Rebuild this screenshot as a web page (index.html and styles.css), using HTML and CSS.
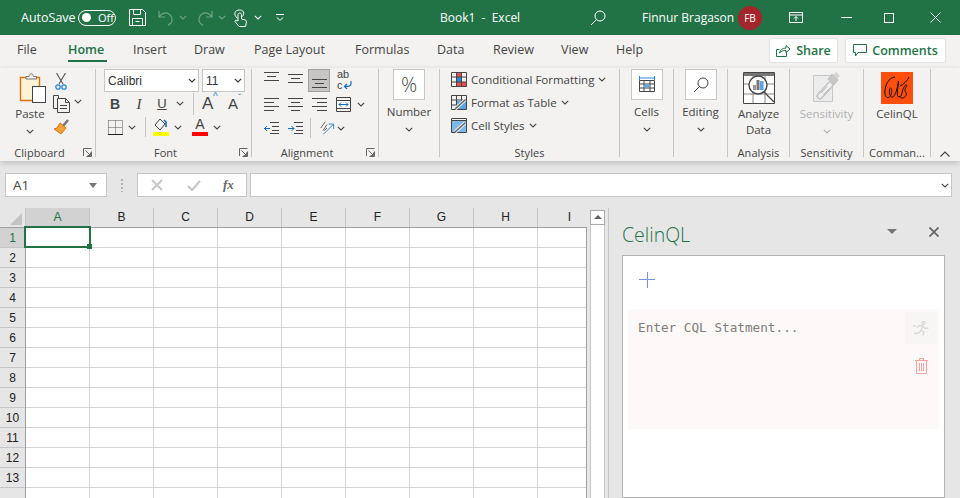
FILE: index.html
```html
<!DOCTYPE html>
<html lang="en">
<head>
    <meta charset="UTF-8">
    <title>Book1 - Excel</title>
    <link rel="stylesheet" href="styles.css">
</head>
<body>
    <svg class="defs" width="0" height="0">
        <symbol id="chev" viewBox="0 0 8 5"><path d="M.8.8 4 4l3.2-3.2" fill="none" stroke="currentColor" stroke-width="1.1"/></symbol>
        <symbol id="launch" viewBox="0 0 9 9"><path d="M.5 8V.5h8M8.500 3.500v5h-5M2.500 2.500l5 5M7.500 4.500v3h-3" fill="none" stroke="#666"/></symbol>
    </svg>

    <!-- title bar -->
    <header class="titlebar">
        <span class="autosave">AutoSave</span>
        <span class="toggle"><i></i>Off</span>
        <svg class="tb-save" width="17" height="17" viewBox="0 0 17 17" fill="none" stroke="#fff"><path d="M.5.500h13l3 3v13H.5zM4.500.500v5h7v-5M3.500 16.500v-7h10v7M6.500 12.500h4"/></svg>
        <svg class="tb-undo" width="16" height="16" viewBox="0 0 16 16" fill="none" stroke="#6fa287" stroke-width="1.2"><path d="M1 1v6h6M1.500 6.500C4 3 8 2 11 4s4 6 2 9l-3 2.500"/></svg>
        <svg class="tb-chev" width="8" height="5"><use href="#chev"/></svg>
        <svg class="tb-redo" width="16" height="16" viewBox="0 0 16 16" fill="none" stroke="#6fa287" stroke-width="1.2"><path d="M15 1v6H9M14.500 6.500C12 3 8 2 5 4s-4 6-2 9l3 2.500"/></svg>
        <svg class="tb-chev" width="8" height="5"><use href="#chev"/></svg>
        <svg class="tb-touch" width="13" height="18" viewBox="0 0 13 18" fill="none" stroke="#fff"><path d="M3.500 9.500C1 7 .5 5.500 1 3.500 2 .5 8 0 9.500 3c.5 1.500 0 3-1 4.500M4 5.500c0-2 3.500-2 3.500 0v4.500l4 1c1 .5 1 1.500.8 3l-.8 3.500H5l-4-5c0-1.500 1.500-1.500 3-.5z"/></svg>
        <svg class="tb-chev white" width="8" height="5"><use href="#chev"/></svg>
        <svg class="tb-custom" width="8" height="7" viewBox="0 0 8 7" fill="none" stroke="#fff"><path d="M0 .5h8M.8 3.500 4 6.300l3.200-2.800"/></svg>
        <span class="doc-title">Book1&nbsp; -&nbsp; Excel</span>
        <svg class="tb-search" width="16" height="16" viewBox="0 0 16 16" fill="none" stroke="#fff"><circle cx="10" cy="6" r="5"/><path d="M6.500 9.500 1 15"/></svg>
        <span class="user">Finnur Bragason</span>
        <span class="avatar">FB</span>
        <svg class="tb-display" width="14" height="11" viewBox="0 0 14 11" fill="none" stroke="#fff"><path d="M.5.500h13v10H.5zM.5 3h13M7 9V4.500M5 6.500l2-2 2 2"/></svg>
        <svg class="tb-min" width="11" height="1"><path d="M0 .5h11" stroke="#fff"/></svg>
        <svg class="tb-max" width="10" height="10"><rect x=".5" y=".5" width="9" height="9" fill="none" stroke="#fff"/></svg>
        <svg class="tb-close" width="11" height="11" viewBox="0 0 11 11"><path d="M.5.500l10 10M10.500.500l-10 10" stroke="#fff"/></svg>
    </header>

    <!-- tabs -->
    <nav class="tabs">
        <span class="tab t-file">File</span>
        <span class="tab t-home active">Home</span>
        <span class="tab t-insert">Insert</span>
        <span class="tab t-draw">Draw</span>
        <span class="tab t-layout">Page Layout</span>
        <span class="tab t-formulas">Formulas</span>
        <span class="tab t-data">Data</span>
        <span class="tab t-review">Review</span>
        <span class="tab t-view">View</span>
        <span class="tab t-help">Help</span>
        <span class="pill share">
            <svg width="15" height="13" viewBox="0 0 15 13" fill="none" stroke="#217346"><path d="M10.500 7.500v5H.5V5.500h3M3.500 9c.5-3 3-5 6.500-5V1.500L14 5l-4 3.500V6.500C7.500 6.500 5 7 3.500 9z"/></svg>
            Share
        </span>
        <span class="pill comments">
            <svg width="14" height="13" viewBox="0 0 14 13" fill="none" stroke="#217346"><path d="M.5.500h13v8H5L2.500 12V8.500H.5z"/></svg>
            Comments
        </span>
    </nav>

    <!-- ribbon -->
    <section class="ribbon">
        <div class="group g-clipboard">
            <div class="group-body">
                <div class="big paste-col">
                    <svg width="28" height="30" viewBox="0 0 28 30" fill="none"><path d="M1.500 4.500h19v23h-19z" fill="#fff3d6" stroke="#d9730d" stroke-width="1.4"/><path d="M7 6V3.500h3c.5-3.500 4-3.500 4.500 0h3V6z" fill="#f3f2f1" stroke="#777"/><rect x="13.500" y="13.500" width="13" height="16" fill="#fff" stroke="#444"/></svg>
                    <span class="big-label">Paste</span>
                    <svg class="chev" width="8" height="5"><use href="#chev"/></svg>
                </div>
                <div class="clip-tools">
                    <svg width="12" height="17" viewBox="0 0 12 17" fill="none"><path d="M1.500 0 8 11M10.500 0 4 11" stroke="#555" stroke-width="1.1"/><circle cx="3" cy="14" r="2.200" stroke="#2b88d8" stroke-width="1.300"/><circle cx="9" cy="14" r="2.200" stroke="#2b88d8" stroke-width="1.300"/></svg>
                    <span class="copy-row">
                        <svg width="17" height="18" viewBox="0 0 17 18" fill="none" stroke="#444"><path d="M5.500 3.500v-3H.5v13h4"/><path d="M4.500 3.500h8l4 4v10h-12zM12.500 3.500v4h4M7 10.500h7M7 13.500h7"/></svg>
                        <svg class="chev" width="8" height="5"><use href="#chev"/></svg>
                    </span>
                    <svg class="brush" width="17" height="16" viewBox="0 0 17 16" fill="none"><path d="M10 7l5-6" stroke="#777" stroke-width="2.500"/><path d="M7 4l6 5-5 6-7-5 3-1z" fill="#f2a33a" stroke="#d9730d"/></svg>
                </div>
            </div>
            <div class="group-label launched">Clipboard<svg class="launch" width="9" height="9"><use href="#launch"/></svg></div>
        </div>

        <div class="group g-font">
            <div class="group-body col">
                <div class="font-row first">
                    <span class="select font-name">Calibri<svg width="8" height="5"><use href="#chev"/></svg></span>
                    <span class="select font-size">11<svg width="8" height="5"><use href="#chev"/></svg></span>
                </div>
                <div class="font-row second">
                    <span class="btn bold">B</span>
                    <span class="btn italic">I</span>
                    <span class="btn under">U</span>
                    <svg class="chev-s" width="8" height="5"><use href="#chev"/></svg>
                    <span class="vsep"></span>
                    <span class="btn grow">A<sup>^</sup></span>
                    <span class="btn shrink">A<sup>ˇ</sup></span>
                </div>
                <div class="font-row third">
                    <svg class="borders" width="15" height="15" viewBox="0 0 15 15" fill="none"><path d="M.5.500h14M.5.500v13M14.500.500v13M7.500.500v13M.5 7.500h14" stroke="#555" stroke-dasharray="1 1"/><path d="M0 14.500h15" stroke="#222"/></svg>
                    <svg class="chev-s" width="8" height="5"><use href="#chev"/></svg>
                    <span class="vsep short"></span>
                    <span class="swatch-btn">
                        <svg width="15" height="13" viewBox="0 0 15 13" fill="none"><path d="M6 1 1 7l5 5 5-6z" stroke="#444"/><path d="M12 9V4l-2-2" stroke="#106ebe" stroke-width="1.600"/></svg>
                        <i class="swatch yellow"></i>
                    </span>
                    <svg class="chev-s" width="8" height="5"><use href="#chev"/></svg>
                    <span class="swatch-btn colour">
                        <span class="letter-a">A</span>
                        <i class="swatch red"></i>
                    </span>
                    <svg class="chev-s" width="8" height="5"><use href="#chev"/></svg>
                </div>
            </div>
            <div class="group-label launched">Font<svg class="launch" width="9" height="9"><use href="#launch"/></svg></div>
        </div>

        <div class="group g-align">
            <div class="group-body col">
                <div class="align-row first">
                    <span class="abtn top"><svg width="15" height="10" viewBox="0 0 15 10"><path d="M0 .5h15M3 4.500h9M0 8.500h15" stroke="#444"/></svg></span>
                    <span class="abtn middle"><svg width="15" height="10" viewBox="0 0 15 10"><path d="M0 .5h15M3 4.500h9M0 8.500h15" stroke="#444"/></svg></span>
                    <span class="abtn on"><svg width="15" height="10" viewBox="0 0 15 10"><path d="M0 .5h15M3 4.500h9M0 8.500h15" stroke="#444"/></svg></span>
                    <span class="abtn wrap">ab<br>c<svg width="9" height="8" viewBox="0 0 9 8" fill="none"><path d="M8 0v3c0 2-2 2.500-6 2.500M4 3 1.500 5.500 4 8" stroke="#106ebe" stroke-width="1.200"/></svg></span>
                </div>
                <div class="align-row">
                    <span class="abtn"><svg width="15" height="13" viewBox="0 0 15 13"><path d="M0 .5h15M0 4.500h10M0 8.500h15M0 12.500h10" stroke="#444"/></svg></span>
                    <span class="abtn"><svg width="15" height="13" viewBox="0 0 15 13"><path d="M0 .5h15M3 4.500h9M0 8.500h15M3 12.500h9" stroke="#444"/></svg></span>
                    <span class="abtn"><svg width="15" height="13" viewBox="0 0 15 13"><path d="M0 .5h15M5 4.500h10M0 8.500h15M5 12.500h10" stroke="#444"/></svg></span>
                    <span class="abtn"><svg width="15" height="15" viewBox="0 0 15 15" fill="none"><path d="M.5.500h14v14H.5z" stroke="#444"/><path d="M.5 3.500h14M.5 11.500h14" stroke="#444"/><rect x="1" y="4" width="13" height="7" fill="#fff"/><path d="M3 7.500h9M5 5.500l-2 2 2 2M10 5.500l2 2-2 2" stroke="#106ebe"/></svg></span>
                    <svg class="chev-s" width="8" height="5"><use href="#chev"/></svg>
                </div>
                <div class="align-row">
                    <span class="abtn"><svg width="15" height="12" viewBox="0 0 15 12" fill="none"><path d="M6 .5h9M8 4.500h7M8 8.500h7M6 11.500h9" stroke="#444"/><path d="M0 6.500h6M3 4 .5 6.500 3 9" stroke="#106ebe"/></svg></span>
                    <span class="abtn"><svg width="15" height="12" viewBox="0 0 15 12" fill="none"><path d="M6 .5h9M8 4.500h7M8 8.500h7M6 11.500h9" stroke="#444"/><path d="M0 6.500h6M3.500 4 6 6.500 3.500 9" stroke="#106ebe"/></svg></span>
                    <span class="vsep short tight"></span>
                    <svg class="orient" width="16" height="16" viewBox="0 0 18 16" fill="none"><path d="M2 8 7 1M4.500 11 9 4M9 8l-3 3" stroke="#555"/><path d="M5 15 16 4M11 3.500h5.500V9" stroke="#2b88d8" stroke-width="1.100"/></svg>
                    <svg class="chev-s" width="8" height="5"><use href="#chev"/></svg>
                </div>
            </div>
            <div class="group-label launched">Alignment<svg class="launch" width="9" height="9"><use href="#launch"/></svg></div>
        </div>

        <div class="group g-number">
            <div class="group-body">
                <div class="big">
                    <span class="box"><span class="percent">%</span></span>
                    <span class="big-label">Number</span>
                    <svg class="chev" width="8" height="5"><use href="#chev"/></svg>
                </div>
            </div>
            <div class="group-label"></div>
        </div>

        <div class="group g-styles">
            <div class="group-body col styles-col">
                <span class="style-row">
                    <svg width="16" height="15" viewBox="0 0 16 15" fill="none"><rect x="5" y="1" width="6" height="4" fill="#e8504f"/><rect x="5" y="10" width="10" height="4" fill="#e8504f"/><rect x="5" y="5" width="6" height="5" fill="#2b88d8"/><path d="M.5.500h15v14H.5zM.5 5h15M.5 10h15M5.500.500v14M10.500.500v14" stroke="#444"/></svg>
                    <span>Conditional Formatting</span>
                    <svg width="8" height="5"><use href="#chev"/></svg>
                </span>
                <span class="style-row">
                    <svg width="16" height="15" viewBox="0 0 16 15" fill="none"><path d="M.5.500h15v14H.5zM.5 5h15M.5 10h15M5.500.500v14M10.500.500v14" stroke="#444"/><rect x="6" y="6" width="9" height="8" fill="#5ba5e4"/><path d="M4 14l10-9" stroke="#f3f2f1" stroke-width="3.500"/><path d="M4 14l10-9" stroke="#666" stroke-width="1.600"/></svg>
                    <span>Format as Table</span>
                    <svg width="8" height="5"><use href="#chev"/></svg>
                </span>
                <span class="style-row">
                    <svg width="16" height="15" viewBox="0 0 16 15" fill="none"><path d="M.5.500h15v14H.5z" stroke="#444"/><rect x="1" y="3" width="14" height="11" fill="#7db8ea"/><path d="M.5 2.500h15" stroke="#444"/><path d="M4 14l10-9" stroke="#f3f2f1" stroke-width="3.500"/><path d="M4 14l10-9" stroke="#666" stroke-width="1.600"/></svg>
                    <span>Cell Styles</span>
                    <svg width="8" height="5"><use href="#chev"/></svg>
                </span>
            </div>
            <div class="group-label">Styles</div>
        </div>

        <div class="group g-cells">
            <div class="group-body">
                <div class="big">
                    <span class="box">
                        <svg width="18" height="17" viewBox="0 0 18 17" fill="none"><path d="M1.500 2h15M1.500 0v4M16.500 0v4" stroke="#2b88d8"/><path d="M1.500 4.500h15v11h-15zM1.500 8h15M1.500 12h15M6 4.500v11M12 4.500v11" stroke="#444"/><rect x="6.500" y="8.500" width="5" height="3" fill="#5ba5e4"/></svg>
                    </span>
                    <span class="big-label">Cells</span>
                    <svg class="chev" width="8" height="5"><use href="#chev"/></svg>
                </div>
            </div>
            <div class="group-label"></div>
        </div>

        <div class="group g-editing">
            <div class="group-body">
                <div class="big">
                    <span class="box">
                        <svg width="16" height="16" viewBox="0 0 16 16" fill="none" stroke="#444"><circle cx="10" cy="6" r="5"/><path d="M6.500 9.500 1 15"/></svg>
                    </span>
                    <span class="big-label">Editing</span>
                    <svg class="chev" width="8" height="5"><use href="#chev"/></svg>
                </div>
            </div>
            <div class="group-label"></div>
        </div>

        <div class="group g-analysis">
            <div class="group-body">
                <div class="big">
                    <svg class="top-icon" width="32" height="32" viewBox="0 0 32 32" fill="none">
                        <path d="M.5.500h31v31H.5z" fill="#fff" stroke="#444"/>
                        <rect x="1" y="1" width="30" height="3" fill="#777"/>
                        <path d="M1 12h30M1 22h30M10 4v27M22 4v27" stroke="#888"/>
                        <circle cx="15" cy="13" r="9" fill="#fff" stroke="#444" stroke-width="1.400"/>
                        <rect x="10" y="13" width="3" height="5" fill="#999"/>
                        <rect x="13.500" y="8" width="3" height="10" fill="#777"/>
                        <rect x="17" y="9" width="3.500" height="9" fill="#5ba5e4"/>
                        <path d="M21 20l10 10" stroke="#444" stroke-width="1.300"/>
                    </svg>
                    <span class="big-label">Analyze<br>Data</span>
                </div>
            </div>
            <div class="group-label">Analysis</div>
        </div>

        <div class="group g-sens">
            <div class="group-body">
                <div class="big muted">
                    <svg class="top-icon" width="27" height="30" viewBox="0 0 27 30" fill="none">
                        <path d="M.5 3.500h19v26H.5z" fill="#ececec" stroke="#c6c6c6"/>
                        <path d="M7 24 17 13" stroke="#c4c4c4" stroke-width="7" stroke-linecap="round"/>
                        <path d="M7 24 17 13" stroke="#efefef" stroke-width="4" stroke-linecap="round"/>
                        <path d="M8 21l6-6.500M10.500 23l6-6.500" stroke="#b8b8b8"/>
                        <path d="M15 7l6 6 4-5-6-6z" fill="#c8c8c8" stroke="#c0c0c0"/>
                        <path d="M20 3l3-3 4 4-3 3z" fill="#d4d4d4"/>
                    </svg>
                    <span class="big-label">Sensitivity</span>
                    <svg class="chev" width="8" height="5"><use href="#chev"/></svg>
                </div>
            </div>
            <div class="group-label">Sensitivity</div>
        </div>

        <div class="group g-command">
            <div class="group-body">
                <div class="big">
                    <svg class="top-icon" width="32" height="32" viewBox="0 0 32 32" fill="none">
                        <rect width="32" height="32" fill="#ff4e0d"/>
                        <path d="M14 5C8 5 3 14 4 22c.5 4 4 5 6 1 1-3 1-7-.5-7-2 0-1.500 10 2 9 3-1 5-9 6-16 0 5-3 16 .5 16 2 0 3-3 3.500-6 .5-2 2-6 4-6 1.500 0-3 4-1 7 2 2 0 6-3 6-2 0-3-2-3-2M19 14c3-1 8-6 9-9" stroke="#111" stroke-width="1"/>
                    </svg>
                    <span class="big-label">CelinQL</span>
                </div>
            </div>
            <div class="group-label">Comman...</div>
        </div>
        <svg class="collapse" width="10" height="6" viewBox="0 0 10 6"><path d="M.5 5.500 5 1l4.500 4.500" fill="none" stroke="#444" stroke-width="1.100"/></svg>
    </section>

    <!-- formula bar -->
    <div class="formula">
        <span class="namebox">A1<i class="tri"></i></span>
        <span class="grip"></span>
        <span class="fx-box">
            <svg width="12" height="12" viewBox="0 0 12 12"><path d="M1 1l10 10M11 1 1 11" stroke="#c6c6c6" stroke-width="2"/></svg>
            <svg width="14" height="11" viewBox="0 0 14 11"><path d="M1 6l4 4 8-9" fill="none" stroke="#c6c6c6" stroke-width="2"/></svg>
            <span class="fx">fx</span>
        </span>
        <span class="fx-input"><svg width="8" height="5"><use href="#chev"/></svg></span>
    </div>

    <!-- sheet and task pane -->
    <main class="workspace">
        <div class="sheet">
            <div class="col-heads">
                <span class="corner"><i></i></span>
                <span class="ch sel">A</span><span class="ch">B</span><span class="ch">C</span><span class="ch">D</span><span class="ch">E</span><span class="ch">F</span><span class="ch">G</span><span class="ch">H</span><span class="ch last">I</span>
            </div>
            <div class="sheet-body">
                <div class="row-heads">
                    <span class="rh sel">1</span><span class="rh">2</span><span class="rh">3</span><span class="rh">4</span><span class="rh">5</span><span class="rh">6</span><span class="rh">7</span><span class="rh">8</span><span class="rh">9</span><span class="rh">10</span><span class="rh">11</span><span class="rh">12</span><span class="rh">13</span>
                </div>
                <div class="cells">
                    <div class="active-cell"><i></i></div>
                </div>
            </div>
        </div>
        <div class="vscroll">
            <span class="vscroll-up"></span>
        </div>
        <aside class="pane">
            <div class="pane-head">
                <span class="pane-title">CelinQL</span>
                <i class="pane-menu"></i>
                <svg width="10" height="10" viewBox="0 0 10 10"><path d="M.5.500l9 9M9.500.500l-9 9" stroke="#666" stroke-width="1.800"/></svg>
            </div>
            <div class="pane-box">
                <svg class="add" width="16" height="16" viewBox="0 0 16 16"><path d="M0 7.500h16M8.500 0v16" stroke="#7a92e0"/></svg>
                <div class="statement">
                    <span class="placeholder">Enter CQL Statment...</span>
                    <div class="stmt-tools">
                        <span class="run">
                            <svg width="16" height="15" viewBox="0 0 16 15" fill="none" stroke="#d8d6d4" stroke-width="1.300"><circle cx="10.500" cy="2" r="1.500"/><path d="M3.500 6.500l3.500-2 3 .5-2 4 3 2-1 3.500M8 9.500 6 12l-5 .5M10 5l2 2.500 3.500-.5M0 5h2.500"/></svg>
                        </span>
                        <svg class="trash" width="13" height="16" viewBox="0 0 13 16" fill="none" stroke="#ffa0a0"><path d="M0 2.500h13M4.500 2.500V.5h4v2M1.500 2.500v13h10v-13M4.500 5v8M6.500 5v8M8.500 5v8"/></svg>
                    </div>
                </div>
            </div>
        </aside>
    </main>
</body>
</html>
```

FILE: styles.css
```css
* {
    box-sizing: border-box;
}
html, body {
    margin: 0;
    height: 498px;
    overflow: hidden;
}
body {
    width: 960px;
    font-family: "Open Sans", "Noto Sans", sans-serif;
    font-size: 12px;
    color: #444;
    background-color: #e6e6e6;
}
.defs {
    position: absolute;
}
svg {
    display: block;
    flex: none;
}

/* title bar */
.titlebar {
    height: 35px;
    background-color: #217346;
    color: white;
    display: flex;
    align-items: center;
    padding-left: 21px;
}
.autosave {
    width: 57px;
    font-size: 12.5px;
}
.toggle {
    width: 38px;
    height: 16px;
    border: 1px solid white;
    border-radius: 8px;
    display: flex;
    align-items: center;
    font-size: 11px;
    padding-left: 3px;
    gap: 7px;
}
.toggle i {
    width: 9px;
    height: 9px;
    border-radius: 50%;
    background-color: white;
}
.tb-save { margin-left: 13px; }
.tb-undo { margin-left: 12px; }
.tb-chev { margin-left: 5px; color: #6fa287; }
.tb-chev.white { color: white; margin-left: 7px; }
.tb-redo { margin-left: 10px; }
.tb-touch { margin-left: 8px; }
.tb-custom { margin-left: 14px; }
.doc-title {
    margin-left: 156px;
    width: 150px;
    font-size: 12px;
}
.tb-search { margin-left: 0; }
.user {
    margin-left: 36px;
    width: 96px;
    font-size: 12px;
}
.avatar {
    width: 24px;
    height: 24px;
    border-radius: 50%;
    background-color: #a4262c;
    font-size: 10px;
    display: flex;
    align-items: center;
    justify-content: center;
}
.tb-display { margin-left: 27px; }
.tb-min { margin-left: 38px; }
.tb-max { margin-left: 32px; }
.tb-close { margin-left: 36px; }

/* tabs */
.tabs {
    height: 33px;
    background-color: #f3f2f1;
    display: flex;
    position: relative;
    padding-top: 4px;
}
.tab {
    height: 23px;
    line-height: 22px;
    font-size: 12.5px;
    color: #444;
    white-space: nowrap;
}
.t-file { margin-left: 17px; width: 51px; }
.t-home { width: 39px; }
.t-insert { margin-left: 26px; width: 61px; }
.t-draw { width: 60px; }
.t-layout { width: 101px; }
.t-formulas { width: 82px; }
.t-data { width: 56px; }
.t-review { width: 68px; }
.t-view { width: 55px; }
.t-help { width: 154px; }
.tab.active {
    color: #217346;
    font-weight: 600;
    box-shadow: 0 -2px 0 #217346 inset;
}
.pill {
    height: 23px;
    margin-right: 9px;
    background-color: white;
    border-radius: 2px;
    box-shadow: 0 0 1px 1px #e3e2e1;
    color: #217346;
    font-size: 12.5px;
    font-weight: 600;
    display: flex;
    align-items: center;
    justify-content: center;
    gap: 5px;
}
.share { width: 67px; }
.comments { width: 99px; }

/* ribbon */
.ribbon {
    height: 93px;
    background-color: #f3f2f1;
    display: flex;
    position: relative;
    box-shadow: 0 2px 6px rgba(0, 0, 0, 0.18);
    padding-top: 1px;
}
.group {
    height: 88px;
    border-right: 1px solid #c6c6c6;
    display: flex;
    flex-direction: column;
    flex: none;
    position: relative;
}
.g-clipboard { width: 96px; }
.g-font { width: 156px; }
.g-align { width: 127px; }
.g-number { width: 61px; }
.g-styles { width: 180px; }
.g-cells { width: 54px; }
.g-editing { width: 54px; }
.g-analysis { width: 62px; }
.g-sens { width: 74px; }
.g-command { width: 67px; }
.group-body {
    flex: 1;
    display: flex;
    min-height: 0;
}
.group-body.col {
    flex-direction: column;
}
.group-label {
    height: 13px;
    text-align: center;
    line-height: 18px;
    font-size: 11px;
    letter-spacing: 0.05px;
    white-space: nowrap;
}
.group-label.launched {
    padding-right: 16px;
}
.launch {
    position: absolute;
    right: 3px;
    bottom: 0;
}
.big {
    flex: 1;
    display: flex;
    flex-direction: column;
    align-items: center;
    color: #444;
}
.big-label {
    font-size: 11.5px;
    line-height: 16px;
    margin-top: 4px;
    text-align: center;
    white-space: nowrap;
}
.big .chev {
    margin-top: 7px;
}
.box {
    width: 32px;
    height: 31px;
    background-color: white;
    border: 1px solid #c6c6c6;
    display: flex;
    align-items: center;
    justify-content: center;
}
.percent {
    font-size: 20px;
    font-weight: 300;
    color: #444;
}
.top-icon {
    margin-top: 3px;
}
.muted {
    color: #b1b1b1;
}
.g-analysis .big-label { margin-top: 2px; }
.g-sens .big-label { margin-top: 4px; }
.g-sens .chev { margin-top: 7px; }
.g-command .big-label { margin-top: 2px; }

/* clipboard */
.paste-col {
    flex: none;
    width: 36px;
    margin-left: 12px;
}
.paste-col svg:first-child {
    margin: 4px 0 0 5px;
}
.paste-col .big-label {
    margin-top: 3px;
}
.clip-tools {
    margin-left: 5px;
    padding-top: 4px;
    display: flex;
    flex-direction: column;
    gap: 5px;
    align-items: flex-start;
}
.clip-tools > svg:first-child {
    margin-left: 2px;
}
.copy-row {
    display: flex;
    align-items: center;
    gap: 4px;
}
.copy-row .chev {
    margin-top: -6px;
}
.brush {
    margin-top: 1px;
}

/* font */
.g-font .group-body {
    padding-left: 8px;
}
.font-row {
    display: flex;
    align-items: center;
    height: 24px;
}
.font-row.first {
    gap: 3px;
    height: 23px;
}
.font-row.second {
    height: 23px;
    margin-left: -1px;
}
.select {
    height: 23px;
    background-color: white;
    border: 1px solid #c6c6c6;
    display: flex;
    align-items: center;
    justify-content: space-between;
    padding: 0 2px 0 3px;
    font-family: "Liberation Sans", Arial, sans-serif;
    font-size: 12px;
    color: #333;
}
.font-name { width: 95px; }
.font-size { width: 43px; padding-left: 3px; }
.btn {
    width: 24px;
    text-align: center;
    color: #444;
    font-size: 14px;
    line-height: 20px;
}
.bold { font-weight: 700; font-family: "Liberation Sans", sans-serif; }
.italic { font-style: italic; font-family: "Liberation Serif", serif; font-size: 15px; }
.under {
    width: 22px;
    text-decoration: underline;
    font-family: "Liberation Sans", sans-serif;
    font-size: 13px;
}
.under + .chev-s {
    margin-left: 3px;
}
.grow, .shrink {
    font-size: 17px;
    position: relative;
    text-align: left;
    font-family: "Liberation Sans", sans-serif;
}
.grow { padding-left: 5px; }
.shrink { padding-left: 7px; font-size: 15px; }
.grow sup, .shrink sup {
    position: absolute;
    top: -3px;
    font-size: 10px;
    line-height: 12px;
    color: #2b88d8;
}
.grow sup { left: 16px; }
.shrink sup { left: 17px; top: -1px; }
.chev-s {
    margin: 0 2px;
    color: #444;
}
.vsep {
    width: 1px;
    height: 22px;
    background-color: #c6c6c6;
    margin: 0 3px 0 7px;
}
.vsep.short {
    height: 20px;
    margin: 0 7px;
}
.vsep.tight {
    margin: 0 8px 0 3px;
}
.borders {
    margin-left: 4px;
    margin-right: 3px;
}
.swatch-btn {
    width: 16px;
    display: flex;
    flex-direction: column;
    align-items: center;
    gap: 1px;
    margin-right: 3px;
}
.swatch-btn.colour {
    margin-left: 8px;
}
.swatch {
    display: block;
    width: 16px;
    height: 4px;
}
.yellow { background-color: #ffff00; }
.red { background-color: #ff0000; }
.letter-a {
    font-family: "Liberation Sans", sans-serif;
    font-size: 14px;
    line-height: 13px;
    color: #444;
}

/* alignment */
.g-align .group-body {
    padding-left: 7px;
}
.align-row {
    height: 24px;
    display: flex;
    align-items: center;
}
.align-row.first {
    height: 23px;
}
.abtn {
    width: 24px;
    height: 23px;
    display: flex;
    align-items: center;
    justify-content: center;
    flex: none;
}
.abtn.top { padding-bottom: 7px; }
.abtn.middle { padding-bottom: 3px; }
.abtn.on {
    width: 22px;
    margin: 0 1px;
    padding-top: 7px;
    background-color: #c6c6c6;
    border: 1px solid #a0a0a0;
}
.abtn.wrap {
    display: block;
    font-family: "Liberation Sans", sans-serif;
    font-size: 11px;
    line-height: 11px;
    padding: 0 0 0 6px;
    color: #444;
}
.abtn.wrap svg {
    display: inline-block;
}

/* styles */
.styles-col {
    padding: 3px 0 0 11px;
    gap: 8px;
}
.style-row {
    height: 15px;
    display: flex;
    align-items: center;
    gap: 4px;
    font-size: 11.5px;
    white-space: nowrap;
}
.collapse {
    position: absolute;
    right: 10px;
    bottom: 4px;
}

/* formula bar */
.formula {
    height: 47px;
    padding: 12px 8px 11px 5px;
    display: flex;
}
.namebox {
    width: 102px;
    background-color: white;
    border: 1px solid #c6c6c6;
    display: flex;
    align-items: center;
    justify-content: space-between;
    padding: 0 9px 0 7px;
    font-size: 13.5px;
}
.tri {
    width: 0;
    height: 0;
    border-left: 4px solid transparent;
    border-right: 4px solid transparent;
    border-top: 5px solid #777;
}
.grip {
    width: 2px;
    margin: 6px 14px 5px 14px;
    background-image: linear-gradient(#b5b5b5 50%, transparent 50%);
    background-size: 2px 4px;
}
.fx-box {
    width: 110px;
    background-color: white;
    border: 1px solid #c6c6c6;
    display: flex;
    align-items: center;
    gap: 24px;
    padding-left: 13px;
}
.fx {
    font-family: "Liberation Serif", serif;
    font-style: italic;
    font-weight: 700;
    font-size: 13px;
    color: #666;
    margin-left: -2px;
}
.fx-input {
    width: 702px;
    margin-left: 3px;
    background-color: white;
    border: 1px solid #c6c6c6;
    display: flex;
    align-items: center;
    justify-content: flex-end;
    padding-right: 2px;
}

/* sheet */
.workspace {
    height: 290px;
    display: flex;
    overflow: hidden;
}
.sheet {
    width: 587px;
    flex: none;
    display: flex;
    flex-direction: column;
    font-family: "Liberation Sans", Arial, sans-serif;
    font-size: 12px;
    color: #222;
}
.col-heads {
    height: 20px;
    display: flex;
    border-bottom: 1px solid #9f9f9f;
}
.corner {
    width: 26px;
    flex: none;
    border-right: 1px solid #c6c6c6;
    position: relative;
}
.corner i {
    position: absolute;
    right: 3px;
    bottom: 2px;
    width: 0;
    height: 0;
    border-left: 12px solid transparent;
    border-bottom: 12px solid #c4c4c4;
}
.ch {
    width: 64px;
    flex: none;
    text-align: center;
    line-height: 19px;
    border-right: 1px solid #c6c6c6;
}
.ch.last {
    width: 49px;
    padding-left: 14px;
    border-right: none;
}
.ch.sel {
    background-color: #d2d2d2;
    color: #217346;
}
.sheet-body {
    flex: 1;
    display: flex;
    min-height: 0;
}
.row-heads {
    width: 26px;
    flex: none;
    border-right: 1px solid #9f9f9f;
}
.rh {
    display: block;
    height: 20px;
    line-height: 21px;
    text-align: center;
    border-bottom: 1px solid #c6c6c6;
}
.rh.sel {
    background-color: #d2d2d2;
    color: #217346;
}
.cells {
    flex: 1;
    position: relative;
    background-color: white;
    background-image: linear-gradient(to right, transparent 63px, #d4d4d4 63px), linear-gradient(to bottom, transparent 19px, #d4d4d4 19px);
    background-size: 64px 20px;
    border-right: 1px solid #9f9f9f;
}
.active-cell {
    position: absolute;
    left: -2px;
    top: -2px;
    width: 67px;
    height: 22px;
    border: 2px solid #217346;
}
.active-cell i {
    position: absolute;
    right: -3px;
    bottom: -3px;
    width: 5px;
    height: 5px;
    background-color: #217346;
}

/* scrollbar */
.vscroll {
    width: 15px;
    margin: 2px 0 0 3px;
    background-color: white;
    border-left: 1px solid #c6c6c6;
    border-right: 1px solid #c6c6c6;
    flex: none;
}
.vscroll-up {
    display: block;
    height: 15px;
    margin: 0 -1px;
    border: 1px solid #ababab;
    position: relative;
}
.vscroll-up::after {
    content: "";
    position: absolute;
    left: 3px;
    top: 4px;
    border-left: 4px solid transparent;
    border-right: 4px solid transparent;
    border-bottom: 4px solid #606060;
}

/* task pane */
.pane {
    flex: 1;
    margin-left: 3px;
    border-left: 1px solid #c6c6c6;
    padding: 0 15px 0 13px;
    display: flex;
    flex-direction: column;
    min-width: 0;
}
.pane-head {
    height: 47px;
    flex: none;
    display: flex;
    align-items: center;
    padding-right: 6px;
}
.pane-title {
    flex: 1;
    font-size: 19.5px;
    font-weight: 300;
    color: #217346;
    margin-top: 5px;
}
.pane-menu {
    width: 0;
    height: 0;
    border-left: 5px solid transparent;
    border-right: 5px solid transparent;
    border-top: 5px solid #777;
    margin: 0 32px 0 0;
}
.pane-box {
    flex: 1;
    background-color: white;
    border: 1px solid #b5b5b5;
    padding: 0 5px;
}
.add {
    margin: 16px 0 21px 11px;
}
.statement {
    height: 120px;
    background-color: #fdf9f8;
    display: flex;
    justify-content: space-between;
    padding: 3px 2px 0 10px;
}
.placeholder {
    font-family: "DejaVu Sans Mono", monospace;
    font-size: 12.7px;
    color: #7f7d7b;
    line-height: 31px;
}
.stmt-tools {
    display: flex;
    flex-direction: column;
    align-items: center;
}
.run {
    width: 32px;
    height: 32px;
    background-color: #f8f6f5;
    display: flex;
    align-items: center;
    justify-content: center;
}
.trash {
    margin-top: 14px;
}
```
